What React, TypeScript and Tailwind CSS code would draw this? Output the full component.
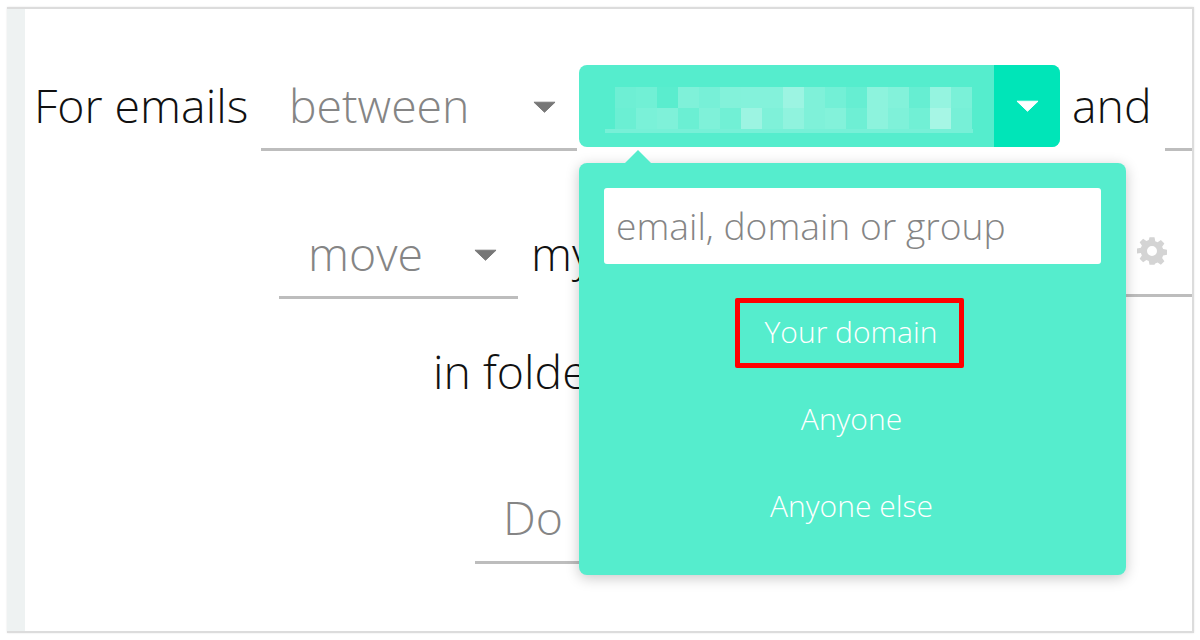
const blur = [
  [0.15, 0.17, 0.03, 0.25, 0.2, 0.27, 0.28, 0.28, 0.42, 0.25, 0.18, 0.1, 0.33, 0.27, 0.1, 0.38, 0.22],
  [0.13, 0.22, 0.25, 0.13, 0.25, 0.17, 0.42, 0.25, 0.35, 0.25, 0.27, 0.15, 0.33, 0.25, 0.17, 0.48, 0.2],
];

function Caret({ className }: { className: string }) {
  return (
    <svg viewBox="0 0 24 12" className={className}>
      <path d="M1 1h22L12 11.5z" fill="currentColor" stroke="currentColor" strokeWidth="1" strokeLinejoin="round" />
    </svg>
  );
}

function Gear() {
  return (
    <svg viewBox="0 0 24 24" className="w-[30px] h-[30px] text-[#d4d4d4]" fill="currentColor">
      <path
        fillRule="evenodd"
        d="M10 1h4l.6 3.1 1.9.8 2.6-1.8 2.8 2.8-1.8 2.6.8 1.9 3.1.6v4l-3.1.6-.8 1.9 1.8 2.6-2.8 2.8-2.6-1.8-1.9.8L14 23h-4l-.6-3.1-1.9-.8-2.6 1.8-2.8-2.8 1.8-2.6-.8-1.9L0 14v-4l3.1-.6.8-1.9L2.1 4.900l2.8-2.800 2.600 1.800 1.900-.8zM12 8a4 4 0 1 0 0 8 4 4 0 0 0 0-8z"
      />
    </svg>
  );
}

export default function App() {
  return (
    <div className="w-[1200px] h-[640px] bg-white pt-[7px] pl-[7px] font-['Open_Sans',sans-serif] font-light text-[46.4px] leading-none text-[#111]">
      <div className="w-[1187px] h-[626px] flex overflow-hidden border-t-2 border-r-2 border-b-2 border-[#dcdcdc] shadow-[0_0_2px_rgba(0,0,0,0.1)]">
        <div className="w-[18px] shrink-0 bg-[#eef2f2]" />
        <div className="relative flex-1 flex flex-col min-w-0">
          {/* first sentence */}
          <div className="flex mt-[56px] h-[86px] pl-[9px] items-stretch shrink-0">
            <div className="w-[227px] shrink-0 flex items-center pb-[6px]">For emails</div>
            <div className="w-[316px] mr-[2px] shrink-0 flex items-center justify-between border-b-[3px] border-[#bdbdbd] pl-[28px] pr-[21px] text-[#858585]">
              <span className="pb-[3px]">between</span>
              <Caret className="w-[23px] h-[12px] text-[#777]" />
            </div>
            <div className="w-[481px] h-[82px] shrink-0 flex rounded-[8px] overflow-hidden bg-[#55edcd]">
              <div className="flex-1 pt-[22px] pl-[26px]">
                <div className="flex flex-col ml-[10px]">
                  {blur.map((row, i) => (
                    <div key={i} className="flex">
                      {row.map((a, j) => (
                        <div key={j} className="w-[21px] h-[21px]" style={{ backgroundColor: `rgba(255,255,255,${a})` }} />
                      ))}
                    </div>
                  ))}
                </div>
                <div className="w-[368px] h-[4px] bg-white/20" />
              </div>
              <div className="w-[66px] flex items-center justify-center bg-[#00e5b8]">
                <Caret className="w-[23px] h-[12px] text-white" />
              </div>
            </div>
            <div className="ml-[12px] w-[93px] shrink-0 flex items-center pb-[6px]">and</div>
            <div className="flex-1 border-b-[3px] border-[#bdbdbd]" />
          </div>

          {/* second sentence */}
          <div className="flex mt-[62px] h-[86px] pl-[254px] shrink-0">
            <div className="w-[239px] shrink-0 flex items-center justify-between border-b-[3px] border-[#bdbdbd] pl-[29px] pr-[21px] text-[#858585]">
              <span className="pb-[3px]">move</span>
              <Caret className="w-[23px] h-[12px] text-[#777]" />
            </div>
            <div className="ml-[13px] flex items-center pb-[5px]">my</div>
            <div className="ml-auto w-[66px] h-[84px] flex items-center justify-start pl-[11px] pb-[6px] border-b-[3px] border-[#bdbdbd]">
              <Gear />
            </div>
          </div>

          {/* folder */}
          <div className="pl-[408px] mt-[48px] h-[48px] flex items-center shrink-0">in folder</div>

          {/* last select */}
          <div className="flex pl-[450px] mt-[60px] shrink-0">
            <div className="w-[300px] h-[109px] border-b-[3px] border-[#bdbdbd] pl-[28px] pt-[39px] text-[#858585]">Do</div>
          </div>

          {/* dropdown panel */}
          <div className="absolute left-[554px] top-[154px] w-[547px] h-[412px] rounded-[8px] bg-[#55edcd] shadow-[0_3px_14px_rgba(0,0,0,0.22)] px-[25px] pt-[25px] text-white">
            <div className="absolute left-[46px] top-[-13px] w-0 h-0 border-l-[13px] border-r-[13px] border-b-[13px] border-l-transparent border-r-transparent border-b-[#55edcd]" />
            <div className="h-[76px] rounded-[3px] bg-white flex items-center pl-[12px] text-[37.2px] text-[#858585]">
              email, domain or group
            </div>
            <div className="flex flex-col items-center text-[30px]">
              <div className="mt-[34px] -ml-[6px] w-[229px] h-[70px] border-[5px] border-[#ff0000] rounded-[2px] flex items-center justify-center pb-[2px] pl-[3px]">
                Your domain
              </div>
              <div className="mt-[16px] -ml-[2px] h-[70px] flex items-center">Anyone</div>
              <div className="mt-[17px] -ml-[2px] h-[70px] flex items-center">Anyone else</div>
            </div>
          </div>
        </div>
      </div>
    </div>
  );
}
